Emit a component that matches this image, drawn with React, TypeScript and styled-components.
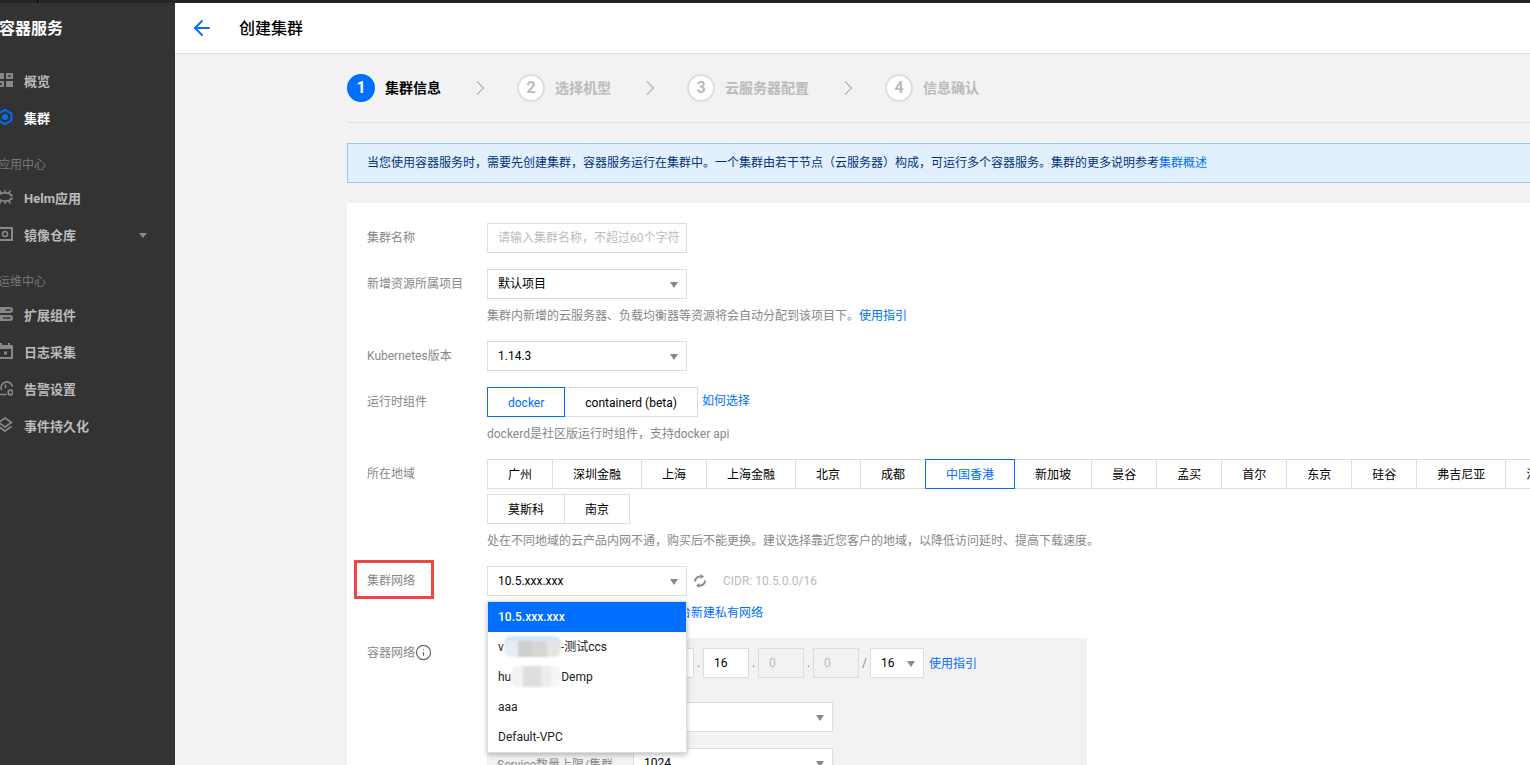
import React from 'react';
import styled, {createGlobalStyle} from 'styled-components';
import {ArrowLeft, Info} from 'lucide-react';

const BLUE = '#006eff';
const LINE = '#ddd';
const MUTED = '#888';

const GlobalStyle = createGlobalStyle`
  html, body {
    margin: 0;
    padding: 0;
    height: 100%;
    overflow: hidden;
    background: #f2f2f2;
    font-family: Roboto, "Noto Sans CJK SC", sans-serif;
    font-size: 12px;
    color: #000;
  }
  * {
    box-sizing: border-box;
  }
`;

const OverviewIcon = () => (
  <NavSvg viewBox="0 0 16 16">
    <path d="M0 1h7v6H0zM9 9h7v6H9z" />
    <path fillRule="evenodd" d="M9 1h7v6H9zM11.500 3v2h2V3zM0 9h7v6H0zM2.500 11v2h2v-2z" />
  </NavSvg>
);

const ClusterIcon = () => (
  <NavSvg viewBox="0 0 16 16">
    <path d="M8 0.800l6.500 3.700v7L8 15.200l-6.500-3.700v-7z" fill="none" stroke={BLUE} strokeWidth="2" />
    <circle cx="8" cy="8" r="3" fill={BLUE} />
  </NavSvg>
);

const HelmIcon = () => (
  <NavSvg viewBox="0 0 16 16">
    <path
      d="M1.500 6.500C4 3 12 3 14.500 6.500M1.500 9.500C4 13 12 13 14.500 9.500M2.500 1.500L4.500 4.500M13.500 1.500L11.500 4.500M8 1v2.500M2.500 14.500L4.500 11.500M13.500 14.500L11.500 11.500M8 15v-2.500M0 6.500h3M13 6.500h3M0 9.500h3M13 9.500h3"
      fill="none"
      stroke={MUTED}
      strokeWidth="1.600"
    />
  </NavSvg>
);

const ImageIcon = () => (
  <NavSvg viewBox="0 0 16 16">
    <rect x="1" y="2" width="14" height="12" fill="none" stroke={MUTED} strokeWidth="2" />
    <circle cx="8" cy="8" r="2.500" fill="none" stroke={MUTED} strokeWidth="1.500" />
  </NavSvg>
);

const AddonIcon = () => (
  <NavSvg viewBox="0 0 16 16">
    <path
      fillRule="evenodd"
      d="M3 1h10a3 3 0 010 6H3a3 3 0 010-6zM8.500 3.200v1.600h5V3.200zM3 9h10a3 3 0 010 6H3a3 3 0 010-6zM6 11.200v1.600h7.500v-1.600z"
    />
  </NavSvg>
);

const LogIcon = () => (
  <NavSvg viewBox="0 0 16 16">
    <path fillRule="evenodd" d="M3 0h2v2h6V0h2v2h3v14H0V2h3zM2 6v8h12V6z" />
    <path d="M7 8.500h3v3H7z" />
  </NavSvg>
);

const AlarmIcon = () => (
  <NavSvg viewBox="0 0 16 16">
    <path d="M4.500 10a5.800 5.800 0 1111-3.500" fill="none" stroke={MUTED} strokeWidth="1.600" />
    <path d="M8.500 4.500v3.500M0.500 14.500h9" fill="none" stroke={MUTED} strokeWidth="1.600" />
    <circle cx="13.500" cy="12.500" r="2.300" fill="none" stroke={MUTED} strokeWidth="1.800" />
  </NavSvg>
);

const LayerIcon = () => (
  <NavSvg viewBox="0 0 16 16">
    <path d="M8 1l6.500 4.500L8 10 1.500 5.500z" fill="none" stroke={MUTED} strokeWidth="1.600" />
    <path d="M1.500 9.500L8 14l6.500-4.500" fill="none" stroke={MUTED} strokeWidth="1.800" />
  </NavSvg>
);

const Chevron = () => (
  <ChevronSvg viewBox="0 0 9 14">
    <path d="M1 0.500L7.500 7 1 13.500" fill="none" stroke="#bbb" strokeWidth="1.500" />
  </ChevronSvg>
);

const RefreshIcon = () => (
  <RefreshSvg viewBox="0 0 14 14">
    <path d="M2 7.500A5 5 0 017.500 2.500" fill="none" stroke={MUTED} strokeWidth="2" />
    <path d="M7.500 0l3.500 2.500-3.500 2.500z" fill={MUTED} />
    <path d="M12 6.500A5 5 0 016.500 11.500" fill="none" stroke={MUTED} strokeWidth="2" />
    <path d="M6.500 9L3 11.500 6.500 14z" fill={MUTED} />
  </RefreshSvg>
);

const regionsFirstRow = [
  '广州', '深圳金融', '上海', '上海金融', '北京', '成都', '中国香港', '新加坡',
  '曼谷', '孟买', '首尔', '东京', '硅谷', '弗吉尼亚', '法兰克福',
];
const regionsSecondRow = ['莫斯科', '南京'];

const steps = ['集群信息', '选择机型', '云服务器配置', '信息确认'];

export default function App() {
  return (
    <Page>
      <GlobalStyle />
      <TopStrip />
      <Shell>
        <Sidebar>
          <SideTitle>容器服务</SideTitle>
          <NavList>
            <NavItem><OverviewIcon />概览</NavItem>
            <NavItem $active><ClusterIcon />集群</NavItem>
            <NavGroup $shift={-2}>应用中心</NavGroup>
            <NavItem><HelmIcon />Helm应用</NavItem>
            <NavItem><ImageIcon />镜像仓库<NavCaret /></NavItem>
            <NavGroup $shift={-2}>运维中心</NavGroup>
            <NavItem><AddonIcon />扩展组件</NavItem>
            <NavItem><LogIcon />日志采集</NavItem>
            <NavItem><AlarmIcon />告警设置</NavItem>
            <NavItem><LayerIcon />事件持久化</NavItem>
          </NavList>
        </Sidebar>
        <Main>
          <Header>
            <BackButton><ArrowLeft size={24} strokeWidth={1.8} /></BackButton>
            <HeaderTitle>创建集群</HeaderTitle>
          </Header>
          <Content>
            <Steps>
              {steps.map((label, i) => (
                <React.Fragment key={label}>
                  {i > 0 && <Chevron />}
                  <StepCircle $current={i === 0}>{i + 1}</StepCircle>
                  <StepLabel $current={i === 0}>{label}</StepLabel>
                </React.Fragment>
              ))}
            </Steps>
            <Notice>
              当您使用容器服务时，需要先创建集群，容器服务运行在集群中。一个集群由若干节点（云服务器）构成，可运行多个容器服务。集群的更多说明参考
              <Link>集群概述</Link>
            </Notice>
            <Card>
              <FormRow>
                <Label>集群名称</Label>
                <Field>
                  <TextInput>请输入集群名称，不超过60个字符</TextInput>
                </Field>
              </FormRow>
              <FormRow>
                <Label>新增资源所属项目</Label>
                <Field>
                  <Select>默认项目</Select>
                  <Help>
                    集群内新增的云服务器、负载均衡器等资源将会自动分配到该项目下。<Link>使用指引</Link>
                  </Help>
                </Field>
              </FormRow>
              <FormRow>
                <Label>Kubernetes版本</Label>
                <Field>
                  <Select>1.14.3</Select>
                </Field>
              </FormRow>
              <FormRow>
                <Label>运行时组件</Label>
                <Field>
                  <TabRow>
                    <Tab $active>docker</Tab>
                    <Tab>containerd (beta)</Tab>
                    <TabLink>如何选择</TabLink>
                  </TabRow>
                  <Help>dockerd是社区版运行时组件，支持docker api</Help>
                </Field>
              </FormRow>
              <FormRow>
                <Label>所在地域</Label>
                <Field>
                  <TabRow>
                    {regionsFirstRow.map(r => (
                      <Tab key={r} $active={r === '中国香港'}>{r}</Tab>
                    ))}
                  </TabRow>
                  <TabRow $second>
                    {regionsSecondRow.map(r => (
                      <Tab key={r}>{r}</Tab>
                    ))}
                  </TabRow>
                  <Help>处在不同地域的云产品内网不通，购买后不能更换。建议选择靠近您客户的地域，以降低访问延时、提高下载速度。</Help>
                </Field>
              </FormRow>
              <FormRow>
                <Label>
                  集群网络
                  <Highlight />
                </Label>
                <Field>
                  <NetworkLine>
                    <Select>
                      10.5.xxx.xxx
                      <Dropdown>
                        <Option $selected>10.5.xxx.xxx</Option>
                        <Option>v<Smudge $width={57} $tint />-测试ccs</Option>
                        <Option>hu<Smudge $width={50} />Demp</Option>
                        <Option>aaa</Option>
                        <Option>Default-VPC</Option>
                      </Dropdown>
                    </Select>
                    <RefreshIcon />
                    <Cidr>CIDR: 10.5.0.0/16</Cidr>
                  </NetworkLine>
                  <Help>
                    如现有的网络不合适，您可以去<Link>控制台新建私有网络</Link>
                  </Help>
                </Field>
              </FormRow>
              <FormRow>
                <Label>
                  容器网络
                  <InfoMark><Info size={17} strokeWidth={1.7} /></InfoMark>
                </Label>
                <Panel>
                  <PanelRow $gap={24}>
                    <PanelLabel>CIDR</PanelLabel>
                    <IpGroup>
                      <IpInput>172</IpInput>
                      <IpDot>.</IpDot>
                      <IpInput>16</IpInput>
                      <IpDot>.</IpDot>
                      <IpInput $disabled>0</IpInput>
                      <IpDot>.</IpDot>
                      <IpInput $disabled>0</IpInput>
                      <IpSlash>/</IpSlash>
                      <MaskSelect>16</MaskSelect>
                      <GuideLink>使用指引</GuideLink>
                    </IpGroup>
                  </PanelRow>
                  <PanelRow $gap={16}>
                    <PanelLabel>Pod数量上限/节点</PanelLabel>
                    <Select>256</Select>
                  </PanelRow>
                  <PanelRow $gap={16}>
                    <PanelLabel>Service数量上限/集群</PanelLabel>
                    <Select>1024</Select>
                  </PanelRow>
                </Panel>
              </FormRow>
            </Card>
          </Content>
        </Main>
      </Shell>
    </Page>
  );
}

const Page = styled.div`
  width: 1530px;
  height: 765px;
  display: flex;
  flex-direction: column;
  overflow: hidden;
`;

const TopStrip = styled.div`
  position: relative;
  flex: none;
  height: 3px;
  background: #262626;

  &::before {
    content: '';
    position: absolute;
    left: 37px;
    top: 0;
    width: 1px;
    height: 3px;
    background: #000;
  }
`;

const Shell = styled.div`
  flex: 1;
  display: flex;
  min-height: 0;
`;

const Sidebar = styled.aside`
  flex: none;
  width: 175px;
  background: #333;
  overflow: hidden;
`;

const SideTitle = styled.div`
  height: 50px;
  margin-left: -1px;
  padding-top: 1px;
  line-height: 50px;
  font-size: 16px;
  font-weight: 700;
  color: #fff;
  white-space: nowrap;
`;

const NavList = styled.nav`
  margin-top: 10px;
`;

const NavSvg = styled.svg`
  flex: none;
  width: 16px;
  height: 16px;
  margin-right: 11px;
  fill: ${MUTED};
`;

const NavItem = styled.div<{$active?: boolean}>`
  position: relative;
  display: flex;
  align-items: center;
  height: 37px;
  margin-left: -3px;
  padding-bottom: 3px;
  font-size: 13px;
  font-weight: 700;
  color: ${p => (p.$active ? '#fff' : '#bbb')};
`;

const NavCaret = styled.span`
  position: absolute;
  left: 142px;
  top: 16px;
  border-style: solid;
  border-width: 5px 4px 0;
  border-color: #888 transparent transparent;
`;

const NavGroup = styled.div<{$shift: number}>`
  height: 43px;
  padding-top: 18px;
  margin-left: ${p => p.$shift}px;
  line-height: 20px;
  font-size: 12px;
  color: #777;
`;

const Main = styled.main`
  flex: 1;
  min-width: 0;
  overflow: hidden;
`;

const Header = styled.header`
  display: flex;
  align-items: center;
  height: 51px;
  padding-left: 15px;
  background: #fff;
  border-bottom: 1px solid #e0e0e0;
`;

const BackButton = styled.span`
  display: flex;
  margin-right: 25px;
  color: ${BLUE};
`;

const HeaderTitle = styled.h1`
  margin: 0 0 2px;
  font-size: 16px;
  font-weight: 500;
`;

const Content = styled.div`
  width: 1300px;
  margin-left: 172px;
`;

const Steps = styled.div`
  display: flex;
  align-items: center;
  height: 69px;
  padding-top: 20px;
  padding-bottom: 20px;
  border-bottom: 1px solid #e0e0e0;
`;

const StepCircle = styled.span<{$current?: boolean}>`
  flex: none;
  display: flex;
  align-items: center;
  justify-content: center;
  width: 28px;
  height: 28px;
  padding-bottom: 1px;
  border-radius: 50%;
  border: 2px solid ${p => (p.$current ? BLUE : '#ddd')};
  background: ${p => (p.$current ? BLUE : '#fff')};
  color: ${p => (p.$current ? '#fff' : '#bbb')};
  font-size: 16px;
  font-weight: 700;
`;

const StepLabel = styled.span<{$current?: boolean}>`
  margin-left: 10px;
  margin-bottom: 2px;
  font-size: 14px;
  font-weight: 700;
  color: ${p => (p.$current ? '#000' : '#bbb')};
`;

const ChevronSvg = styled.svg`
  flex: none;
  width: 9px;
  height: 14px;
  margin: 0 32px 0 35px;
`;

const Notice = styled.div`
  height: 40px;
  margin-top: 20px;
  padding-left: 19px;
  line-height: 38px;
  background: #e2effd;
  border: 1px solid #9cc6f7;
  color: #00337a;
  white-space: nowrap;
`;

const Link = styled.a`
  color: ${BLUE};
`;

const Card = styled.section`
  margin-top: 20px;
  padding: 20px;
  height: 800px;
  background: #fff;
`;

const FormRow = styled.div`
  display: flex;
  margin-bottom: 16px;
`;

const Label = styled.div`
  position: relative;
  flex: none;
  display: flex;
  align-items: flex-start;
  width: 120px;
  line-height: 30px;
  color: ${MUTED};
`;

const Highlight = styled.span`
  position: absolute;
  left: -13px;
  top: -6px;
  width: 80px;
  height: 39px;
  border: 3px solid #ee4444;
`;

const InfoMark = styled.span`
  display: flex;
  margin: 6px 0 0 0;
  color: #666;
`;

const Field = styled.div`
  min-width: 0;
`;

const TextInput = styled.div`
  width: 200px;
  height: 30px;
  padding-left: 10px;
  line-height: 28px;
  background: #fff;
  border: 1px solid ${LINE};
  color: #bbb;
  white-space: nowrap;
  overflow: hidden;
`;

const Select = styled.div`
  position: relative;
  flex: none;
  width: 200px;
  height: 30px;
  padding-left: 10px;
  line-height: 28px;
  background: #fff;
  border: 1px solid ${LINE};

  &::after {
    content: '';
    position: absolute;
    right: 8px;
    top: 12px;
    border-style: solid;
    border-width: 6px 4px 0;
    border-color: ${MUTED} transparent transparent;
  }
`;

const Help = styled.div`
  margin-top: 8px;
  line-height: 18px;
  color: ${MUTED};
  white-space: nowrap;
`;

const TabRow = styled.div<{$second?: boolean}>`
  display: flex;
  margin-top: ${p => (p.$second ? 5 : 0)}px;
`;

const Tab = styled.div<{$active?: boolean}>`
  position: relative;
  z-index: ${p => (p.$active ? 1 : 0)};
  flex: none;
  height: 30px;
  margin-right: -1px;
  padding: 0 20px;
  line-height: 30px;
  background: #fff;
  border: 1px solid ${p => (p.$active ? BLUE : LINE)};
  color: ${p => (p.$active ? BLUE : '#000')};
  white-space: nowrap;
`;

const TabLink = styled(Link)`
  margin-left: 5px;
  line-height: 29px;
`;

const NetworkLine = styled.div`
  display: flex;
  align-items: center;
`;

const RefreshSvg = styled.svg`
  flex: none;
  width: 14px;
  height: 14px;
  margin-left: 6px;
`;

const Cidr = styled.span`
  margin-left: 16px;
  color: #bbb;
`;

const Dropdown = styled.div`
  position: absolute;
  z-index: 5;
  left: -1px;
  top: 34px;
  width: 200px;
  padding: 0;
  background: #fff;
  border: 1px solid ${LINE};
  box-shadow: 0 2px 5px rgba(0, 0, 0, 0.25);
`;

const Option = styled.div<{$selected?: boolean}>`
  height: 30px;
  padding-left: 10px;
  line-height: 30px;
  background: ${p => (p.$selected ? BLUE : '#fff')};
  color: ${p => (p.$selected ? '#fff' : '#222')};
  font-weight: ${p => (p.$selected ? 500 : 400)};
  white-space: nowrap;
`;

const Smudge = styled.span<{$width: number; $tint?: boolean}>`
  display: inline-block;
  vertical-align: middle;
  width: ${p => p.$width}px;
  height: 21px;
  margin-top: -3px;
  border-radius: 7px;
  filter: blur(0.8px);
  background: ${p =>
    p.$tint
      ? 'linear-gradient(#d5e6fb 0 22%, transparent 22%), linear-gradient(90deg, #e8edf3 0 25%, #cfcfcf 25% 50%, #d6d6d6 50% 75%, #e4e4e4 75%)'
      : 'linear-gradient(90deg, #f3f3f3 0 25%, #dedede 25% 60%, #ececec 60% 80%, #f6f6f6 80%)'};
`;

const Panel = styled.div`
  width: 600px;
  padding: 10px;
  background: #f2f2f2;
`;

const PanelRow = styled.div<{$gap: number}>`
  display: flex;
  align-items: center;
  margin-bottom: ${p => p.$gap}px;
`;

const PanelLabel = styled.div`
  flex: none;
  width: 136px;
  color: ${MUTED};
  white-space: nowrap;
`;

const IpGroup = styled.div`
  display: flex;
  align-items: center;
  margin-left: 15px;
`;

const IpInput = styled.div<{$disabled?: boolean}>`
  width: 46px;
  height: 30px;
  padding-left: 10px;
  line-height: 28px;
  background: ${p => (p.$disabled ? '#f2f2f2' : '#fff')};
  border: 1px solid ${LINE};
  color: ${p => (p.$disabled ? '#bbb' : '#000')};
`;

const IpDot = styled.span`
  width: 9px;
  text-align: center;
  color: ${MUTED};
`;

const IpSlash = styled.span`
  width: 11px;
  text-align: center;
  color: ${MUTED};
`;

const MaskSelect = styled(Select)`
  width: 54px;
`;

const GuideLink = styled(Link)`
  margin-left: 5px;
  margin-bottom: 2px;
`;
